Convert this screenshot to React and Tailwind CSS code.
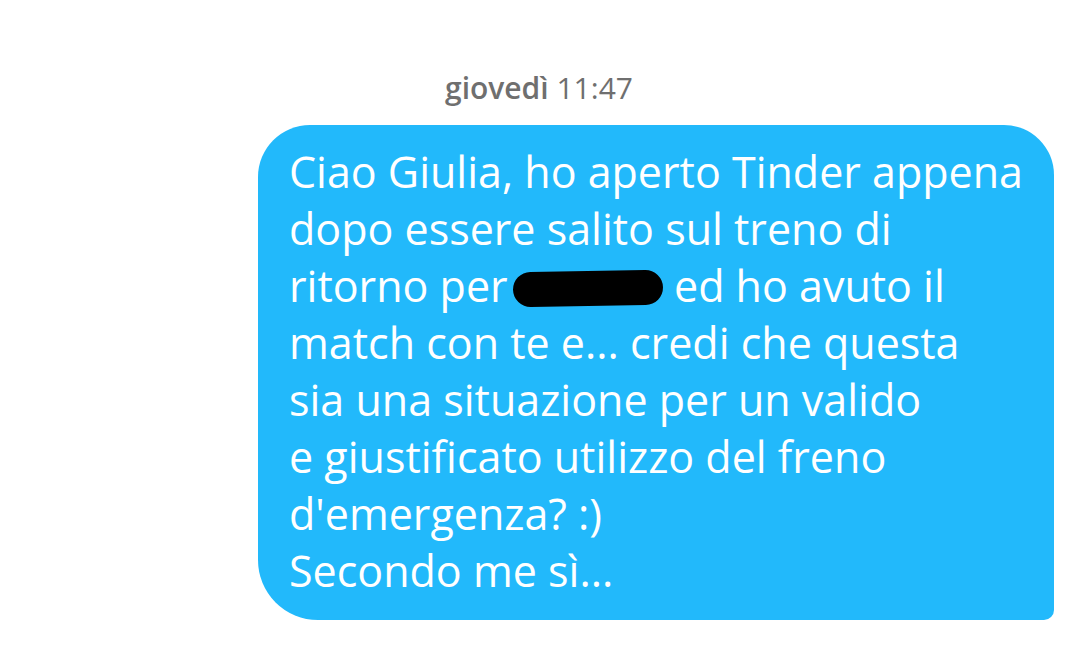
import React from 'react';

const lines = [
  'Ciao Giulia, ho aperto Tinder appena',
  'dopo essere salito sul treno di',
  null,
  'match con te e... credi che questa',
  'sia una situazione per un valido',
  'e giustificato utilizzo del freno',
  "d'emergenza? :)",
  'Secondo me sì...',
];

export default function App() {
  return (
    <div className="w-[1080px] h-[660px] bg-white overflow-hidden" style={{ fontFamily: '"Open Sans", Lato, sans-serif' }}>
      <div className="pt-[70px] pl-[445px] text-[30px] leading-[36px] text-[#6f6f6f]">
        <span className="font-semibold">giovedì</span> <span>11:47</span>
      </div>
      <div className="mt-[19px] ml-[258px] w-[796px] h-[495px] bg-[#22b9fb] rounded-tl-[52px] rounded-tr-[50px] rounded-bl-[60px] rounded-br-[10px] pl-[31px] pt-[18px] text-white text-[43px] leading-[57px]">
        {lines.map((l, i) =>
          l === null ? (
            <div key={i} className="flex items-center whitespace-pre">
              <span>ritorno per </span>
              <span className="inline-block w-[150px] h-[35px] bg-black rounded-full -rotate-1 mt-[6px] -ml-[6px]" />
              <span> ed ho avuto il</span>
            </div>
          ) : (
            <div key={i} className="whitespace-pre">{l}</div>
          )
        )}
      </div>
    </div>
  );
}
